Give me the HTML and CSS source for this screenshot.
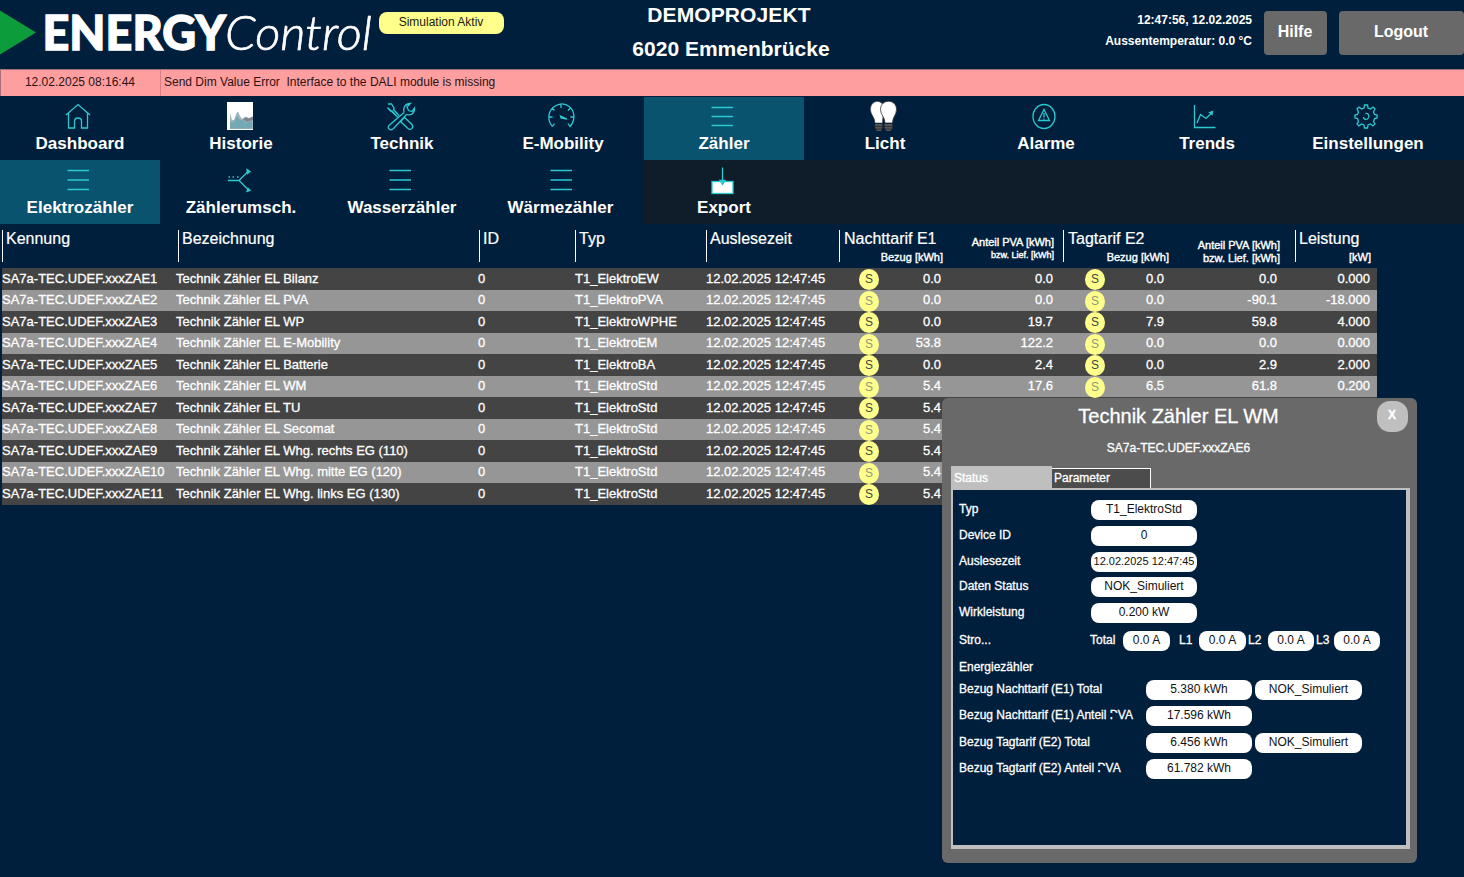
FILE: index.html
```html
<!DOCTYPE html>
<html lang="de">
  <head>
      <meta charset="UTF-8">
      <meta name="viewport" content="width=device-width, initial-scale=1.0">
      <title>ENERGYControl - Elektrozähler</title>
      <link rel="stylesheet" href="styles.css">
  </head>
  <body>
      <header class="header">
          <svg class="logo" width="376" height="68" viewBox="0 0 376 68">
              <path d="M0 10.500L36 32.500L0 54.500Z" fill="#0d9c3c"/>
              <text class="logo-bold" x="42.500" y="49.500" textLength="183.500" lengthAdjust="spacingAndGlyphs">ENERGY</text>
              <text class="logo-light" x="225" y="50" textLength="147" lengthAdjust="spacingAndGlyphs">Control</text>
          </svg>
          <span class="sim">Simulation Aktiv</span>
          <div class="project">
              <div>DEMOPROJEKT</div>
              <div>6020 Emmenbrücke</div>
          </div>
          <div class="info">
              <div>12:47:56, 12.02.2025</div>
              <div>Aussentemperatur: 0.0 °C</div>
          </div>
          <button class="btn btn-help" type="button">Hilfe</button>
          <button class="btn btn-logout" type="button">Logout</button>
      </header>

      <div class="alarm">
          <span class="alarm-time">12.02.2025 08:16:44</span>
          <span class="alarm-text">Send Dim Value Error&nbsp; Interface to the DALI module is missing</span>
      </div>

      <nav class="nav">
          <a class="item">
              <svg class="icon" viewBox="0 0 32 32"><path d="M4 15L16 4.500L28 15M6.500 13.500V28H12.500V21.500Q12.500 18 16 18Q19.500 18 19.500 21.500V28H25.500V13.500"/></svg>
              <span>Dashboard</span>
          </a>
          <a class="item">
              <svg class="icon" viewBox="0 0 32 32">
                  <rect x="4" y="2" width="26" height="28" fill="#fff" stroke="none"/>
                  <path d="M7 13L9 20L11 20L13.500 13L15 11.500L17 16L19 19L22 17L26 18L30 16.500V29H7Z" fill="#9fb6bf" stroke="none"/>
                  <path d="M7 22L11 22L14 16L17 20L20 20L23 23L29 21V28.500H7Z" fill="#72a9b2" stroke="none"/>
                  <path d="M18 18.500L20 19.500L23 17L26 18.500L30 16.500V20L24 22Z" fill="#7f858b" stroke="none"/>
              </svg>
              <span>Historie</span>
          </a>
          <a class="item">
              <svg class="icon" viewBox="0 0 32 32"><path d="M20 12.500C18.500 8 21 3.500 26.500 3.500L23 7L24.500 10.500L28 11.500L30.500 8C31 13 27 16 22.500 14.500L9.500 28.500C6.500 31.500 2.500 28 5 25.500L20 12.500M4 4L7.500 4L10 8L9.500 9.500L15 15.500M13.500 17L8 11H6.500L3.500 7.500ZM18 20L20.500 17.500L27.500 24C30.500 27 27 31 24 28.500L17 22Z"/></svg>
              <span>Technik</span>
          </a>
          <a class="item">
              <svg class="icon" viewBox="0 0 32 32"><path d="M7.500 26.500C1.500 20 3 9.500 11 5.500C21 .5 31 9 28.500 20Q27.700 24 25 26.500L23 23.500M7.500 26.500L9.500 23.500M4 17H7.500M25.500 17H29M16 4V8M7 8L9.500 10.500M25.500 8L23 10.500"/><path d="M15.500 16L22 19L16 18Z" fill="#2cc9d0"/></svg>
              <span>E-Mobility</span>
          </a>
          <a class="item active">
              <svg class="icon" viewBox="0 0 32 32"><path d="M5.500 7.500H27M5.500 16.500H27M5.500 25.500H27"/></svg>
              <span>Zähler</span>
          </a>
          <a class="item">
              <svg class="icon" viewBox="0 0 32 32">
                  <path d="M8 23C8 17 3.500 15 3.500 9.500C3.500-1 17-1 17 9C17 14 15.500 17 15.500 23Z" fill="#fff" stroke="#333" stroke-width=".5"/>
                  <path d="M18 23C18 17 13.500 15 13.500 9.500C13.500-1.500 29.500-1.500 29.500 9.500C29.500 15 25.500 17 25.500 23Z" fill="#fff" stroke="#333" stroke-width=".8"/>
                  <path d="M8 24H15.500V27L14 31H10L8 28ZM17.500 24H25.500V28L23.500 31H19.500L17.500 28Z" fill="#555" stroke="none"/>
                  <path d="M7.500 26.500H26M8 29H25" stroke="#222" stroke-width=".7"/>
              </svg>
              <span>Licht</span>
          </a>
          <a class="item">
              <svg class="icon" viewBox="0 0 32 32"><ellipse cx="16" cy="16.500" rx="11" ry="12"/><path d="M16 9.500L21.500 20.500H10.500ZM16 13V17.500M16 18.500V19.500"/></svg>
              <span>Alarme</span>
          </a>
          <a class="item">
              <svg class="icon" viewBox="0 0 32 32"><path d="M5.500 5V27.500H26.500M8 23L11.500 14.500L17 18.500L22 13.500"/><path d="M20.500 12.500L23.500 11.500L23 14.500Z" fill="#2cc9d0"/></svg>
              <span>Trends</span>
          </a>
          <a class="item">
              <svg class="icon" viewBox="0 0 32 32"><path d="M14 8L14.500 5H17.500L18 8L20.500 9L23 7L25 9L23.500 12L24.500 14.500L27 15V18L24.500 18.500L23.500 21.500L25 24L23 26L20.500 24L18 25L17.500 28H14.500L14 25L11.500 24L9 26L7 24L8.500 21.500L7.500 18.500L5 18V15L7.500 14.500L8.500 12L7 9L9 7L11.500 9ZM15.500 13.500C19 13 20 17 17.500 19C15.500 20 13.500 19 13.500 17"/></svg>
              <span>Einstellungen</span>
          </a>
      </nav>

      <nav class="nav subnav">
          <a class="item active">
              <svg class="icon" viewBox="0 0 32 32"><path d="M5.500 6.500H27M5.500 16H27M5.500 25.500H27"/></svg>
              <span>Elektrozähler</span>
          </a>
          <a class="item">
              <svg class="icon" viewBox="0 0 32 32"><path d="M5 16.500H16L25 7.500M16 16.500L26 26.500M5.500 13H7M9.500 13H11M14 13H15.500"/><path d="M24 5.500L27 7.500L24.500 9.500ZM24 27.500L27 26.500L25 24.500Z" fill="#2cc9d0"/></svg>
              <span>Zählerumsch.</span>
          </a>
          <a class="item">
              <svg class="icon" viewBox="0 0 32 32"><path d="M5.500 6.500H27M5.500 16H27M5.500 25.500H27"/></svg>
              <span>Wasserzähler</span>
          </a>
          <a class="item item-heat">
              <svg class="icon" viewBox="0 0 32 32"><path d="M5.500 6.500H27M5.500 16H27M5.500 25.500H27"/></svg>
              <span>Wärmezähler</span>
          </a>
          <a class="item">
              <svg class="icon" viewBox="0 0 32 32"><rect x="6" y="17.500" width="21" height="12" fill="#fff"/><path d="M16.500 3.500V18"/><path d="M14 16.500H19L16.500 20.500Z" fill="#2cc9d0"/></svg>
              <span>Export</span>
          </a>
      </nav>

      <main>
          <div class="table-head">
              <div class="th">Kennung</div>
              <div class="th">Bezeichnung</div>
              <div class="th">ID</div>
              <div class="th">Typ</div>
              <div class="th">Auslesezeit</div>
              <div class="th th-tarif">
                  <div class="th-main">Nachttarif E1<small>Bezug [kWh]</small></div>
                  <div class="th-pva">Anteil PVA [kWh]<br><span class="tiny">bzw. Lief. [kWh]</span></div>
              </div>
              <div class="th th-tarif tag">
                  <div class="th-main">Tagtarif E2<small>Bezug [kWh]</small></div>
                  <div class="th-pva">Anteil PVA [kWh]<br>bzw. Lief. [kWh]</div>
              </div>
              <div class="th th-power">Leistung<small>[kW]</small></div>
          </div>

          <div class="rows">
              <div class="row"><span>SA7a-TEC.UDEF.xxxZAE1</span><span>Technik Zähler EL Bilanz</span><span>0</span><span>T1_ElektroEW</span><span>12.02.2025 12:47:45</span><i>S</i><b>0.0</b><b>0.0</b><i>S</i><b>0.0</b><b>0.0</b><b>0.000</b></div>
              <div class="row"><span>SA7a-TEC.UDEF.xxxZAE2</span><span>Technik Zähler EL PVA</span><span>0</span><span>T1_ElektroPVA</span><span>12.02.2025 12:47:45</span><i>S</i><b>0.0</b><b>0.0</b><i>S</i><b>0.0</b><b>-90.1</b><b>-18.000</b></div>
              <div class="row"><span>SA7a-TEC.UDEF.xxxZAE3</span><span>Technik Zähler EL WP</span><span>0</span><span>T1_ElektroWPHE</span><span>12.02.2025 12:47:45</span><i>S</i><b>0.0</b><b>19.7</b><i>S</i><b>7.9</b><b>59.8</b><b>4.000</b></div>
              <div class="row"><span>SA7a-TEC.UDEF.xxxZAE4</span><span>Technik Zähler EL E-Mobility</span><span>0</span><span>T1_ElektroEM</span><span>12.02.2025 12:47:45</span><i>S</i><b>53.8</b><b>122.2</b><i>S</i><b>0.0</b><b>0.0</b><b>0.000</b></div>
              <div class="row"><span>SA7a-TEC.UDEF.xxxZAE5</span><span>Technik Zähler EL Batterie</span><span>0</span><span>T1_ElektroBA</span><span>12.02.2025 12:47:45</span><i>S</i><b>0.0</b><b>2.4</b><i>S</i><b>0.0</b><b>2.9</b><b>2.000</b></div>
              <div class="row"><span>SA7a-TEC.UDEF.xxxZAE6</span><span>Technik Zähler EL WM</span><span>0</span><span>T1_ElektroStd</span><span>12.02.2025 12:47:45</span><i>S</i><b>5.4</b><b>17.6</b><i>S</i><b>6.5</b><b>61.8</b><b>0.200</b></div>
              <div class="row"><span>SA7a-TEC.UDEF.xxxZAE7</span><span>Technik Zähler EL TU</span><span>0</span><span>T1_ElektroStd</span><span>12.02.2025 12:47:45</span><i>S</i><b>5.4</b></div>
              <div class="row"><span>SA7a-TEC.UDEF.xxxZAE8</span><span>Technik Zähler EL Secomat</span><span>0</span><span>T1_ElektroStd</span><span>12.02.2025 12:47:45</span><i>S</i><b>5.4</b></div>
              <div class="row"><span>SA7a-TEC.UDEF.xxxZAE9</span><span>Technik Zähler EL Whg. rechts EG (110)</span><span>0</span><span>T1_ElektroStd</span><span>12.02.2025 12:47:45</span><i>S</i><b>5.4</b></div>
              <div class="row"><span>SA7a-TEC.UDEF.xxxZAE10</span><span>Technik Zähler EL Whg. mitte EG (120)</span><span>0</span><span>T1_ElektroStd</span><span>12.02.2025 12:47:45</span><i>S</i><b>5.4</b></div>
              <div class="row"><span>SA7a-TEC.UDEF.xxxZAE11</span><span>Technik Zähler EL Whg. links EG (130)</span><span>0</span><span>T1_ElektroStd</span><span>12.02.2025 12:47:45</span><i>S</i><b>5.4</b></div>
          </div>
      </main>

      <!-- Detail window of the selected meter -->
      <section class="popup">
          <button class="close" type="button">X</button>
          <h2 class="popup-title">Technik Zähler EL WM</h2>
          <p class="popup-sub">SA7a-TEC.UDEF.xxxZAE6</p>
          <div class="tabs">
              <span class="tab tab-active">Status</span>
              <span class="tab">Parameter</span>
          </div>
          <div class="panel">
              <div class="status">
                  <span>Typ</span><span class="pill">T1_ElektroStd</span>
                  <span>Device ID</span><span class="pill">0</span>
                  <span>Auslesezeit</span><span class="pill pill-small">12.02.2025 12:47:45</span>
                  <span>Daten Status</span><span class="pill">NOK_Simuliert</span>
                  <span>Wirkleistung</span><span class="pill">0.200 kW</span>
              </div>
              <div class="current">
                  <span>Stro...</span>
                  <span>Total</span><span class="pill">0.0 A</span>
                  <span>L1</span><span class="pill">0.0 A</span>
                  <span>L2</span><span class="pill">0.0 A</span>
                  <span>L3</span><span class="pill">0.0 A</span>
              </div>
              <div class="energy-title">Energiezähler</div>
              <div class="energy">
                  <span>Bezug Nachttarif (E1) Total</span><span class="pill">5.380 kWh</span><span class="pill">NOK_Simuliert</span>
                  <span>Bezug Nachttarif (E1) Anteil <span class="cut">P</span>VA</span><span class="pill">17.596 kWh</span><span></span>
                  <span>Bezug Tagtarif (E2) Total</span><span class="pill">6.456 kWh</span><span class="pill">NOK_Simuliert</span>
                  <span>Bezug Tagtarif (E2) Anteil <span class="cut">P</span>VA</span><span class="pill">61.782 kWh</span><span></span>
              </div>
          </div>
      </section>
  </body>
</html>
```
FILE: styles.css
```css
*     {
      box-sizing: border-box;
}
body  {
    margin: 0;
    width: 1464px;
    height: 877px;
    overflow: hidden;
    position: relative;
    background-color: #001f3d;
    color: white;
    font-family: "Liberation Sans", Arial, sans-serif;
    font-size: 12px;
}
.header  {
    display: flex;
    align-items: flex-start;
    height: 69px;
}
.logo  {
    flex: none;
}
.logo-bold  {
    font-family: Lato, sans-serif;
    font-weight: 900;
    font-size: 47px;
    fill: white;
    stroke: white;
    stroke-width: 1.3px;
}
.logo-light  {
    font-family: Lato, sans-serif;
    font-weight: 300;
    font-style: italic;
    font-size: 48px;
    fill: white;
    stroke: white;
    stroke-width: .7px;
}
.sim  {
    width: 125px;
    height: 22px;
    margin: 12px 0 0 3px;
    padding-right: 1px;
    line-height: 20px;
    text-align: center;
    background: #ffff8c;
    color: #1c1c10;
    border-radius: 8px;
}
.project  {
    width: 300px;
    margin: -2px 0 0 77px;
    text-align: center;
    font-size: 21px;
    font-weight: bold;
    line-height: 34px;
}
.project div:first-child  {
    margin-left: -4px;
    letter-spacing: .1px;
}
.info  {
    width: 371px;
    margin-top: 10px;
    text-align: right;
    font-weight: bold;
    line-height: 21px;
}
.btn  {
    height: 44px;
    margin-top: 11px;
    padding: 0 1px 3px 0;
    border: none;
    border-radius: 4px;
    background: #696969;
    color: white;
    font-family: inherit;
    font-size: 16px;
    font-weight: bold;
}
.btn-help  {
    width: 63px;
    margin-left: 12px;
}
.btn-logout  {
    width: 125px;
    margin-left: 12px;
}
.alarm  {
    display: flex;
    height: 27px;
    line-height: 25px;
    background: #ff9e9e;
    border-top: 1px solid #a86f7a;
    border-left: 1px solid #a86f7a;
    color: #2b1214;
}
.alarm-time  {
    width: 160px;
    padding-right: 1px;
    text-align: center;
    border-right: 1px solid #d98086;
}
.alarm-text  {
    padding-left: 3px;
}
.nav  {
    display: flex;
    gap: 1px;
    height: 64px;
    padding-top: 1px;
}
.subnav  {
    padding-top: 0;
    background: linear-gradient(90deg, #001f3d 644px, #0f1d2a 644px);
}
.item  {
    display: flex;
    flex-direction: column;
    align-items: center;
    width: 160px;
    padding-top: 3px;
    font-size: 17px;
    font-weight: bold;
    line-height: 20px;
}
.item span  {
    margin-top: 2px;
}
.subnav .item  {
    padding-top: 4px;
}
.item-heat span  {
    margin-right: 5px;
}
.active  {
    background: #09536f;
}
.icon  {
    width: 32px;
    height: 32px;
    margin-right: 4px;
    fill: none;
    stroke: #2cc9d0;
    stroke-width: 1.3;
}
.table-head  {
    display: grid;
    grid-template-columns: 176px 301px 96px 131px 133px 224px 232px 82px;
    grid-template-rows: 32px;
    height: 44px;
    padding: 6px 0 6px 2px;
}
.th  {
    border-left: 1px solid white;
    padding-left: 3px;
    font-size: 16px;
    line-height: 18px;
    -webkit-text-stroke: .2px white;
}
.th-tarif  {
    display: flex;
    padding-left: 4px;
}
.th-main  {
    width: 99px;
}
.tag .th-main  {
    width: 101px;
}
.th small  {
    display: block;
    text-align: right;
    font-size: 11px;
    -webkit-text-stroke: .4px white;
}
.th-pva  {
    width: 111px;
    padding-top: 6px;
    text-align: right;
    font-size: 11px;
    line-height: 13px;
    -webkit-text-stroke: .4px white;
}
.tag .th-pva  {
    padding-top: 9px;
}
.tiny  {
    display: block;
    font-size: 9px;
    line-height: 12px;
}
.th-power small  {
    padding-right: 6px;
}
.rows  {
    width: 1375px;
    margin-left: 2px;
    font-size: 13px;
}
.row  {
    display: grid;
    grid-template-columns: 174px 302px 97px 131px 153px 20px 62px 112px 52px 59px 113px 93px;
    height: 21.5px;
    line-height: 21px;
    background: #444;
    -webkit-text-stroke: .3px white;
}
.row:nth-child(even)  {
    line-height: 19px;
    background: #969696;
}
.row b  {
    font-weight: normal;
    text-align: right;
}
.row i  {
    justify-self: end;
    width: 20px;
    height: 21px;
    margin-top: 1px;
    line-height: 21px;
    border-radius: 50%;
    background: #ffff8c;
    color: #444;
    font-style: normal;
    font-size: 12px;
    text-align: center;
    -webkit-text-stroke: 0;
}
.row:nth-child(even) i  {
    color: #969680;
}
.popup  {
    position: absolute;
    left: 942px;
    top: 398px;
    width: 475px;
    height: 465px;
    padding: 0 7px 0 9px;
    border-radius: 6px;
    background: #696969;
    -webkit-text-stroke: .3px;
}
.close  {
    position: absolute;
    right: 9px;
    top: 3px;
    width: 31px;
    height: 31px;
    padding: 0 1px 4px 0;
    border: none;
    border-radius: 13px;
    background: #bfbfbf;
    color: white;
    font-family: inherit;
    font-size: 12px;
    font-weight: bold;
}
.popup-title  {
    margin: 0 4px 0 0;
    padding-top: 6px;
    font-size: 20px;
    font-weight: normal;
    line-height: 24px;
    text-align: center;
}
.popup-sub  {
    margin: 12px 4px 0 0;
    line-height: 16px;
    text-align: center;
}
.tabs  {
    display: flex;
    align-items: flex-end;
    height: 22px;
    margin-top: 10px;
}
.tab  {
    width: 99px;
    height: 20px;
    padding-left: 2px;
    line-height: 18px;
    background: #4c4c4c;
    border: 1px solid white;
    border-width: 1px 1px 0 0;
}
.tab-active  {
    width: 101px;
    height: 22px;
    padding-left: 3px;
    line-height: 24px;
    background: #bfbfbf;
    border: none;
}
.panel  {
    width: 459px;
    height: 361px;
    padding: 10px 0 0 6px;
    background: #001f3d;
    border: solid #bfbfbf;
    border-width: 2px 4px 4px 2px;
    line-height: 19px;
}
.pill  {
    height: 20px;
    line-height: 18px;
    text-align: center;
    background: white;
    color: #111;
    border-radius: 8px;
    white-space: nowrap;
    -webkit-text-stroke: 0;
}
.pill-small  {
    font-size: 11px;
}
.status  {
    display: grid;
    grid-template-columns: 132px 106px;
    grid-auto-rows: 20px;
    row-gap: 5.75px;
}
.current  {
    display: grid;
    grid-template-columns: 131px 33px 47px 29px 47px 22px 46px 20px 46px;
    margin-top: 8px;
    line-height: 18px;
}
.current span:nth-child(4)  {
    padding-left: 9px;
}
.current span:nth-child(6),
.current span:nth-child(8)  {
    padding-left: 2px;
}
.energy-title  {
    height: 20px;
    margin-top: 6px;
    line-height: 20px;
}
.energy  {
    display: grid;
    grid-template-columns: 187px 106px 107px;
    grid-auto-rows: 20px;
    row-gap: 6.4px;
    margin-top: 3px;
    line-height: 18px;
}
.energy .pill:nth-child(3n)  {
    margin-left: 3px;
    margin-right: -3px;
}
.cut  {
    position: relative;
}
.cut::after  {
    content: "";
    position: absolute;
    left: 0;
    top: 5px;
    width: 8px;
    height: 4px;
    background: #001f3d;
}
```
